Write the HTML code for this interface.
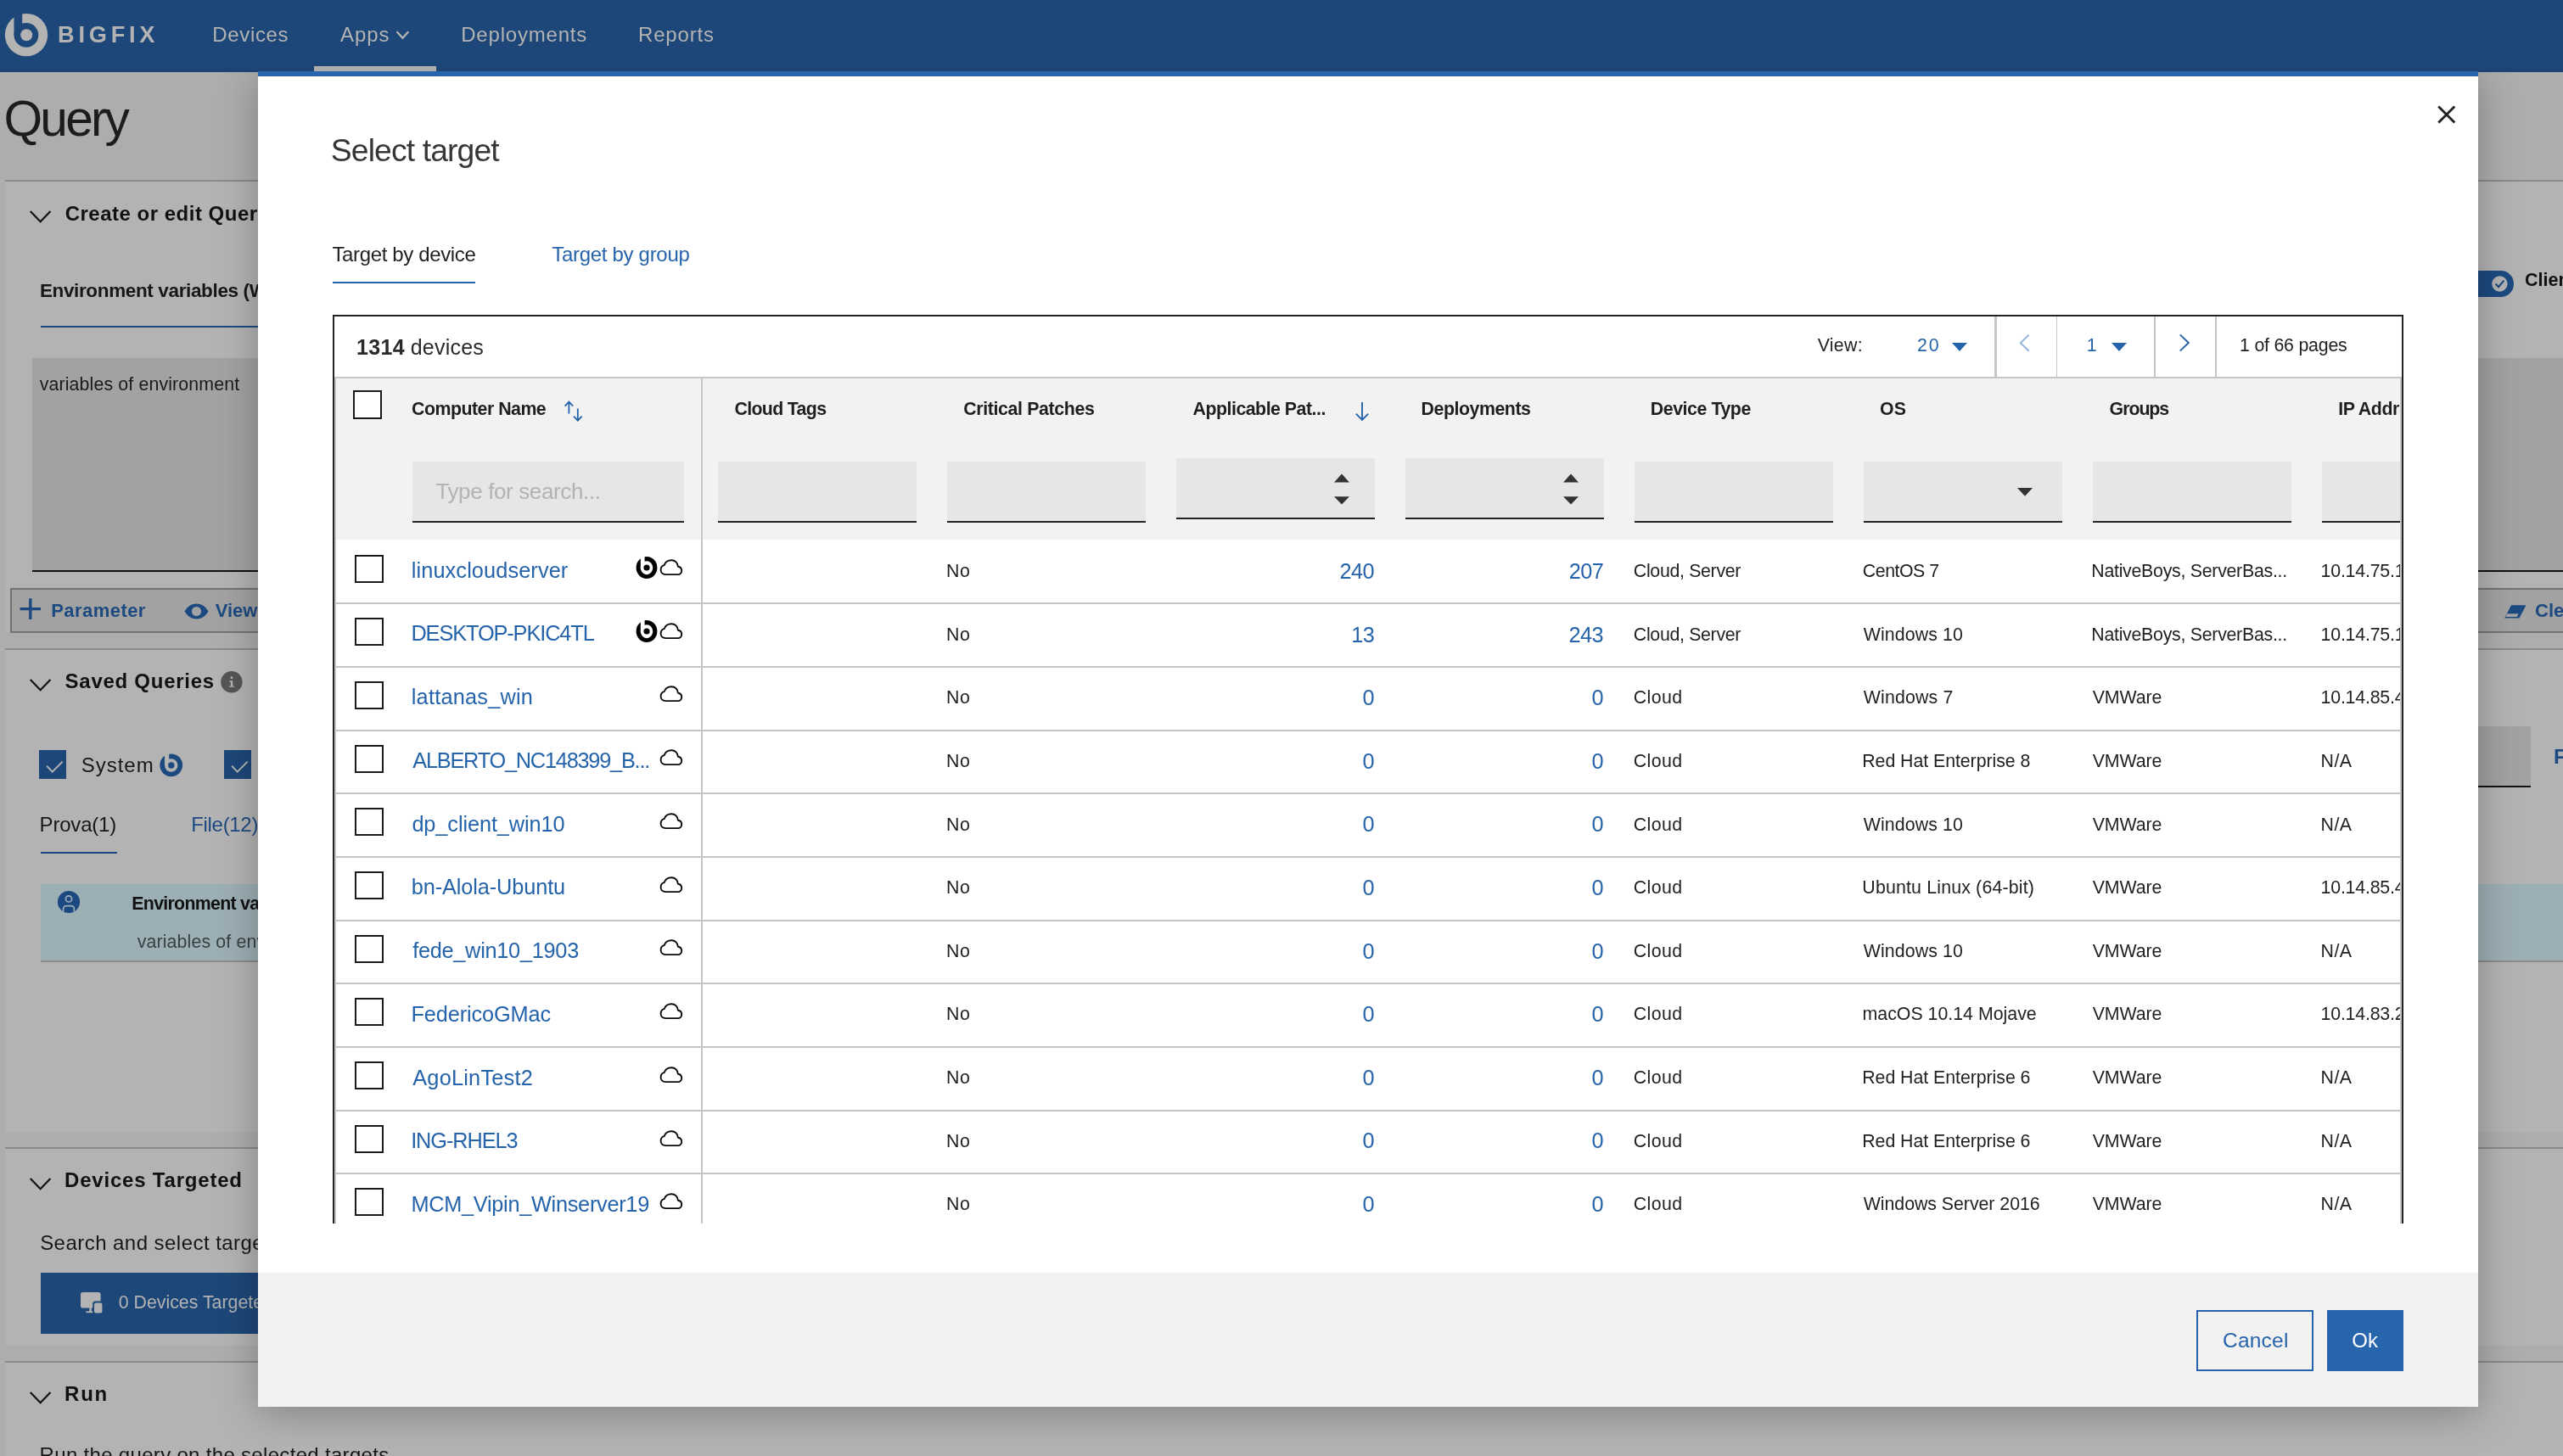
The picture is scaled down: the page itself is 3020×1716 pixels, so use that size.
<!DOCTYPE html>
<html><head><meta charset="utf-8"><title>BigFix Query - Select target</title>
<style>
html,body{margin:0;padding:0;overflow:hidden;}
body{width:3020px;height:1716px;overflow:hidden;position:relative;background:#adadad;font-family:"Liberation Sans",sans-serif;}
.b{position:absolute;box-sizing:border-box;}
.t{position:absolute;white-space:nowrap;line-height:0;height:0;font-family:"Liberation Sans",sans-serif;}
svg{position:absolute;overflow:visible;}
.clip{position:absolute;overflow:hidden;}
</style></head><body><div id="root" style="position:absolute;left:0;top:0;width:3020px;height:1716px;overflow:hidden;will-change:transform;">
<span class="t" style="top:140.00px;font-size:58.67px;color:#1c1c1c;letter-spacing:-2.854px;left:4.60px;">Query</span>
<div class="b" style="left:6px;top:212px;width:3014px;height:2px;background:#8a8a8a;"></div>
<div class="b" style="left:6px;top:214px;width:3014px;height:532px;background:#b3b3b3;"></div>
<svg style="left:34.5px;top:247.5px" width="26" height="16" viewBox="0 0 26 16"><path d="M0.8 1 L12.6 13.2 L24.4 1" fill="none" stroke="#111" stroke-width="2.2"/></svg>
<span class="t" style="top:251.50px;font-size:24px;color:#111;font-weight:bold;letter-spacing:0.499px;left:76.70px;">Create or edit Query</span>
<span class="t" style="top:342.50px;font-size:22.5px;color:#171717;font-weight:bold;letter-spacing:-0.357px;left:46.89px;">Environment variables (Windows)</span>
<div class="b" style="left:48px;top:384px;width:2500px;height:2.3px;background:#1c4a80;"></div>
<div class="b" style="left:38px;top:422px;width:2982px;height:250px;background:#a2a2a2;"></div>
<div class="b" style="left:38px;top:672px;width:2982px;height:2px;background:#111;"></div>
<span class="t" style="top:452.60px;font-size:21.33px;color:#1a1a1a;letter-spacing:0.133px;left:46.73px;">variables of environment</span>
<div class="b" style="left:12px;top:692.5px;width:3100px;height:53.5px;background:#a2a2a2;border:2px solid #767272;"></div>
<svg style="left:23px;top:705px" width="26" height="26" viewBox="0 0 26 26"><path d="M12.8 0.3 V25 M0.5 12.6 H25" stroke="#1c4a80" stroke-width="3.4" fill="none"/></svg>
<span class="t" style="top:720.30px;font-size:22px;color:#1c4a80;font-weight:bold;letter-spacing:0.443px;left:60.22px;">Parameter</span>
<svg style="left:216.5px;top:710.5px" width="29" height="19" viewBox="0 0 29 19">
<path d="M0.5 9.5 C4 3.5 9 0.5 14.5 0.5 C20 0.5 25 3.5 28.5 9.5 C25 15.5 20 18.5 14.5 18.5 C9 18.5 4 15.5 0.5 9.5 Z" fill="#1c4a80"/>
<circle cx="14.5" cy="9.5" r="5.6" fill="#a2a2a2"/></svg>
<span class="t" style="top:720.30px;font-size:22px;color:#1c4a80;font-weight:bold;left:253.64px;">View</span>
<div class="b" style="left:2900px;top:319.3px;width:62px;height:30.4px;background:#1c4a80;border-radius:15.2px;"></div>
<svg style="left:2935px;top:324px" width="22" height="22" viewBox="0 0 22 22"><circle cx="10.4" cy="10.5" r="9.2" fill="#b3b3b3"/><path d="M5.6 10.6 L9 14.2 L15.4 6.6" fill="none" stroke="#1c4a80" stroke-width="2.2"/></svg>
<span class="t" style="top:330.30px;font-size:21.5px;color:#111;font-weight:bold;left:2975.00px;">Client</span>
<svg style="left:2950px;top:712px" width="28" height="18" viewBox="0 0 28 18"><path d="M9 1.2 H26.5 L18.5 16.5 H1.2 Z" fill="#1c4a80"/><path d="M4.2 11.3 L2.5 15 H15.8 L17.7 11.3 Z" fill="#a2a2a2"/></svg>
<span class="t" style="top:720.30px;font-size:22px;color:#1c4a80;font-weight:bold;left:2987.00px;">Clear</span>
<div class="b" style="left:6px;top:764px;width:3014px;height:2px;background:#8a8a8a;"></div>
<div class="b" style="left:6px;top:766px;width:3014px;height:568px;background:#b3b3b3;"></div>
<svg style="left:34.5px;top:799.5px" width="26" height="16" viewBox="0 0 26 16"><path d="M0.8 1 L12.6 13.2 L24.4 1" fill="none" stroke="#111" stroke-width="2.2"/></svg>
<span class="t" style="top:803.10px;font-size:24px;color:#111;font-weight:bold;letter-spacing:0.738px;left:76.57px;">Saved Queries</span>
<svg style="left:259px;top:790px" width="28" height="28" viewBox="0 0 28 28"><circle cx="13.9" cy="13.7" r="12.7" fill="#555"/>
<rect x="12.7" y="7.4" width="2.5" height="2.6" fill="#b3b3b3"/><path d="M11.4 12.2 H15.2 V18.4 H17 V19.8 H10.9 V18.4 H12.9 V13.7 H11.4 Z" fill="#b3b3b3"/></svg>
<div class="b" style="left:46px;top:884.2px;width:32px;height:33.6px;background:#1d4778;"></div>
<svg style="left:46px;top:884.2px" width="32" height="34" viewBox="0 0 32 34"><path d="M9.1 18.6 L15.7 25.6 L27.7 13.6" fill="none" stroke="#b3b3b3" stroke-width="2"/></svg>
<span class="t" style="top:901.60px;font-size:24px;color:#171717;letter-spacing:0.949px;left:95.86px;">System</span>
<svg style="left:187px;top:887px" width="30" height="30" viewBox="0 0 30 30">
<circle cx="14.7" cy="14.8" r="13.4" fill="#1c4a80"/>
<circle cx="14.7" cy="15" r="7.7" fill="#b3b3b3"/>
<rect x="7" y="0" width="5.2" height="15" fill="#b3b3b3"/>
<circle cx="14.8" cy="15" r="3.7" fill="#1c4a80"/></svg>
<div class="b" style="left:264px;top:884.2px;width:32px;height:33.6px;background:#1d4778;"></div>
<svg style="left:264px;top:884.2px" width="32" height="34" viewBox="0 0 32 34"><path d="M9.1 18.6 L15.7 25.6 L27.7 13.6" fill="none" stroke="#b3b3b3" stroke-width="2"/></svg>
<span class="t" style="top:972.20px;font-size:24px;color:#171717;letter-spacing:-0.193px;left:46.60px;">Prova(1)</span>
<div class="b" style="left:48px;top:1004px;width:90px;height:2.3px;background:#1c4a80;"></div>
<span class="t" style="top:972.20px;font-size:24px;color:#1c4a80;letter-spacing:-0.307px;left:225.20px;">File(12)</span>
<div class="b" style="left:2900px;top:856px;width:82px;height:70px;background:#a2a2a2;"></div>
<div class="b" style="left:2900px;top:926px;width:82px;height:2px;background:#111;"></div>
<span class="t" style="top:891.60px;font-size:24.5px;color:#1c4a80;font-weight:bold;left:3008.96px;">Filter</span>
<div class="b" style="left:48px;top:1042px;width:2972px;height:90px;background:#9cafb5;"></div>
<div class="b" style="left:48px;top:1131.5px;width:2972px;height:2px;background:#8c8c8c;"></div>
<svg style="left:67px;top:1049px" width="28" height="28" viewBox="0 0 28 28"><defs><clipPath id="uc"><circle cx="14" cy="14" r="13.1"/></clipPath></defs>
<circle cx="14" cy="14" r="13.1" fill="#1c4a80"/>
<circle cx="14" cy="10.4" r="3.6" fill="none" stroke="#9cafb5" stroke-width="1.7"/>
<rect x="7.6" y="18.6" width="12.8" height="12" rx="3.4" fill="none" stroke="#9cafb5" stroke-width="1.7" clip-path="url(#uc)"/></svg>
<span class="t" style="top:1065.00px;font-size:21.33px;color:#111;font-weight:bold;letter-spacing:-0.716px;left:155.36px;">Environment variables (Windows)</span>
<span class="t" style="top:1110.40px;font-size:21.33px;color:#394144;letter-spacing:0.133px;left:161.73px;">variables of environment</span>
<div class="b" style="left:6px;top:1352px;width:3014px;height:2px;background:#8a8a8a;"></div>
<div class="b" style="left:6px;top:1354px;width:3014px;height:232px;background:#b3b3b3;"></div>
<svg style="left:34.5px;top:1388px" width="26" height="16" viewBox="0 0 26 16"><path d="M0.8 1 L12.6 13.2 L24.4 1" fill="none" stroke="#111" stroke-width="2.2"/></svg>
<span class="t" style="top:1391.30px;font-size:24px;color:#111;font-weight:bold;letter-spacing:0.795px;left:76.08px;">Devices Targeted</span>
<span class="t" style="top:1465.20px;font-size:24px;color:#171717;letter-spacing:0.456px;left:47.16px;">Search and select target devices</span>
<div class="b" style="left:48px;top:1500px;width:400px;height:71.6px;background:#1d4778;"></div>
<svg style="left:94px;top:1522px" width="28" height="28" viewBox="0 0 28 28">
<rect x="1" y="1" width="23.6" height="18.6" rx="2.6" fill="#b3b3b3"/>
<rect x="11.4" y="19" width="2.4" height="5" fill="#b3b3b3"/><rect x="7.4" y="23.4" width="9" height="1.8" fill="#b3b3b3"/>
<rect x="15.2" y="11.6" width="12.6" height="15.4" rx="3" fill="#1d4778"/>
<rect x="17" y="13.4" width="9.4" height="12" rx="2" fill="#b3b3b3"/></svg>
<span class="t" style="top:1535.00px;font-size:21.33px;color:#b3b3b3;left:139.75px;">0 Devices Targeted</span>
<div class="b" style="left:6px;top:1604px;width:3014px;height:2px;background:#8a8a8a;"></div>
<div class="b" style="left:6px;top:1606px;width:3014px;height:120px;background:#b3b3b3;"></div>
<svg style="left:34.5px;top:1640px" width="26" height="16" viewBox="0 0 26 16"><path d="M0.8 1 L12.6 13.2 L24.4 1" fill="none" stroke="#111" stroke-width="2.2"/></svg>
<span class="t" style="top:1643.10px;font-size:24px;color:#111;font-weight:bold;letter-spacing:1.722px;left:76.08px;">Run</span>
<span class="t" style="top:1714.80px;font-size:24px;color:#171717;letter-spacing:0.316px;left:46.60px;">Run the query on the selected targets.</span>
<div class="b" style="left:304px;top:84px;width:2616px;height:1574px;box-shadow:0 7px 44px 0px rgba(0,0,0,0.28);"></div>
<div class="b" style="left:0px;top:0px;width:3020px;height:85.4px;background:#1d4778;"></div>
<svg style="left:0;top:0" width="200" height="86" viewBox="0 0 200 86">
    <circle cx="31" cy="41.1" r="25.2" fill="#b3b3b3"/>
    <circle cx="30.9" cy="41.4" r="14.4" fill="#1d4778"/>
    <rect x="16.5" y="13" width="9.7" height="28.4" fill="#1d4778"/>
    <circle cx="31.2" cy="41.3" r="7" fill="#b3b3b3"/>
    </svg>
<span class="t" style="top:41.40px;font-size:27.2px;color:#b3b3b3;font-weight:bold;letter-spacing:4.773px;left:67.99px;">BIGFIX</span>
<span class="t" style="top:41.30px;font-size:24px;color:#b3b3b3;letter-spacing:0.648px;left:250.30px;">Devices</span>
<span class="t" style="top:41.30px;font-size:24px;color:#b3b3b3;letter-spacing:0.990px;left:400.93px;">Apps</span>
<svg style="left:465px;top:34px" width="20" height="16" viewBox="0 0 20 16"><path d="M2.5 3.2 L9.4 10.8 L16.3 3.2" fill="none" stroke="#b3b3b3" stroke-width="2.3"/></svg>
<div class="b" style="left:370px;top:78px;width:144px;height:6.5px;background:#b3b3b3;"></div>
<span class="t" style="top:41.30px;font-size:24px;color:#b3b3b3;letter-spacing:0.810px;left:543.20px;">Deployments</span>
<span class="t" style="top:41.30px;font-size:24px;color:#b3b3b3;letter-spacing:0.833px;left:752.00px;">Reports</span>
<div class="b" style="left:0px;top:74px;width:3020px;height:11.4px;background:linear-gradient(to bottom, rgba(0,0,0,0), rgba(0,0,0,0.05));"></div>
<div class="b" style="left:304px;top:84px;width:2616px;height:1574px;background:#fff;"></div>
<div class="b" style="left:304px;top:84px;width:2616px;height:6px;background:#2766ac;"></div>
<div class="b" style="left:304px;top:1500px;width:2616px;height:158px;background:#f2f2f2;"></div>
<span class="t" style="top:177.00px;font-size:37.33px;color:#363636;letter-spacing:-0.898px;left:389.84px;">Select target</span>
<svg style="left:2871px;top:123px" width="24" height="24" viewBox="0 0 24 24"><path d="M2.3 2.5 L21.3 21.5 M21.3 2.5 L2.3 21.5" stroke="#222" stroke-width="2.9" fill="none"/></svg>
<span class="t" style="top:299.50px;font-size:24px;color:#222222;letter-spacing:-0.365px;left:391.45px;">Target by device</span>
<div class="b" style="left:392px;top:332px;width:168px;height:2.3px;background:#2563ab;"></div>
<span class="t" style="top:299.50px;font-size:24px;color:#2563ab;letter-spacing:-0.303px;left:650.25px;">Target by group</span>
<div class="b" style="left:392px;top:370.5px;width:2440px;height:1071.5px;border:2px solid #222;border-bottom:none;"></div>
<span class="t" style="top:409.00px;font-size:25px;color:#2a2a2a;font-weight:bold;letter-spacing:0.359px;left:419.92px;">1314</span>
<span class="t" style="top:409.00px;font-size:25px;color:#2a2a2a;letter-spacing:0.228px;left:483.70px;">devices</span>
<span class="t" style="top:407.00px;font-size:21.33px;color:#222222;letter-spacing:0.299px;left:2141.69px;">View:</span>
<span class="t" style="top:407.00px;font-size:21.33px;color:#2563ab;letter-spacing:1.969px;left:2258.91px;">20</span>
<svg style="left:2300px;top:404px" width="18" height="10" viewBox="0 0 18 10"><path d="M0 0 H18 L9.0 10 Z" fill="#2563ab"/></svg>
<div class="b" style="left:2350px;top:372.5px;width:2.7px;height:72px;background:#c6c6c6;"></div>
<svg style="left:2378px;top:393px" width="16" height="23" viewBox="0 0 16 23"><path d="M12.6 1.6 L2.8 11.2 L12.6 20.8" fill="none" stroke="#93b4dc" stroke-width="2"/></svg>
<div class="b" style="left:2422.5px;top:372.5px;width:1.8px;height:72px;background:#c6c6c6;"></div>
<span class="t" style="top:407.00px;font-size:21.33px;color:#2563ab;left:2458.77px;">1</span>
<svg style="left:2488px;top:404px" width="18" height="10" viewBox="0 0 18 10"><path d="M0 0 H18 L9.0 10 Z" fill="#2563ab"/></svg>
<div class="b" style="left:2538px;top:372.5px;width:1.8px;height:72px;background:#c6c6c6;"></div>
<svg style="left:2566px;top:393px" width="16" height="23" viewBox="0 0 16 23"><path d="M2.8 1.4 L12.8 11 L2.8 20.6" fill="none" stroke="#2563ab" stroke-width="2"/></svg>
<div class="b" style="left:2610.3px;top:372.5px;width:1.8px;height:72px;background:#c6c6c6;"></div>
<span class="t" style="top:407.00px;font-size:21.33px;color:#222222;letter-spacing:-0.218px;left:2639.07px;">1 of 66 pages</span>
<div class="b" style="left:394px;top:444px;width:2436px;height:998px;border:2.3px solid #c6c6c6;border-bottom:none;"></div>
<div class="b" style="left:396.3px;top:446.3px;width:2431.4px;height:190px;background:#f2f2f2;"></div>
<div class="b" style="left:825.6px;top:446px;width:2.7px;height:996px;background:#c6c6c6;"></div>
<div class="b" style="left:416px;top:460px;width:34px;height:34px;background:#fff;border:2px solid #1a1a1a;"></div>
<span class="t" style="top:482.40px;font-size:21.33px;color:#1f1f1f;font-weight:bold;letter-spacing:-0.500px;left:485.00px;">Computer Name</span>
<svg style="left:664px;top:472px" width="24" height="26" viewBox="0 0 24 26">
<path d="M6.4 1.6 V15.4 M1.6 6.6 L6.4 1.6 L11.2 6.6 M16.8 9.6 V23.6 M12 18.6 L16.8 23.6 L21.6 18.6" fill="none" stroke="#2563ab" stroke-width="1.8"/></svg>
<span class="t" style="top:482.40px;font-size:21.33px;color:#1f1f1f;font-weight:bold;letter-spacing:-0.652px;left:865.40px;">Cloud Tags</span>
<span class="t" style="top:482.40px;font-size:21.33px;color:#1f1f1f;font-weight:bold;letter-spacing:-0.359px;left:1135.20px;">Critical Patches</span>
<span class="t" style="top:482.40px;font-size:21.33px;color:#1f1f1f;font-weight:bold;letter-spacing:-0.499px;left:1405.59px;">Applicable Pat...</span>
<span class="t" style="top:482.40px;font-size:21.33px;color:#1f1f1f;font-weight:bold;letter-spacing:-0.459px;left:1674.56px;">Deployments</span>
<span class="t" style="top:482.40px;font-size:21.33px;color:#1f1f1f;font-weight:bold;letter-spacing:-0.436px;left:1944.76px;">Device Type</span>
<span class="t" style="top:482.40px;font-size:21.33px;color:#1f1f1f;font-weight:bold;letter-spacing:0.165px;left:2215.00px;">OS</span>
<span class="t" style="top:482.40px;font-size:21.33px;color:#1f1f1f;font-weight:bold;letter-spacing:-1.044px;left:2485.60px;">Groups</span>
<div class="clip" style="left:2750px;top:460px;width:78px;height:50px;">
<span class="t" style="top:22.40px;font-size:21.33px;color:#1f1f1f;font-weight:bold;letter-spacing:-0.400px;left:5.16px;">IP Address</span>
</div>
<svg style="left:1595px;top:473px" width="20" height="24" viewBox="0 0 20 24"><path d="M10 1 V21.6 M2.8 14.6 L10 21.8 L17.2 14.6" fill="none" stroke="#2563ab" stroke-width="1.9"/></svg>
<div class="b" style="left:486px;top:544px;width:320px;height:69.5px;background:#e6e6e6;"></div>
<div class="b" style="left:486px;top:613.5px;width:320px;height:2.2px;background:#222;"></div>
<span class="t" style="top:579.00px;font-size:26px;color:#b3b3b3;letter-spacing:-0.370px;left:513.42px;">Type for search...</span>
<div class="b" style="left:846px;top:544px;width:234px;height:69.5px;background:#e6e6e6;"></div>
<div class="b" style="left:846px;top:613.5px;width:234px;height:2.2px;background:#222;"></div>
<div class="b" style="left:1116px;top:544px;width:234px;height:69.5px;background:#e6e6e6;"></div>
<div class="b" style="left:1116px;top:613.5px;width:234px;height:2.2px;background:#222;"></div>
<div class="b" style="left:1386px;top:540px;width:234px;height:69.5px;background:#e6e6e6;"></div>
<div class="b" style="left:1386px;top:609.5px;width:234px;height:2.2px;background:#222;"></div>
<div class="b" style="left:1656px;top:540px;width:234px;height:69.5px;background:#e6e6e6;"></div>
<div class="b" style="left:1656px;top:609.5px;width:234px;height:2.2px;background:#222;"></div>
<div class="b" style="left:1926px;top:544px;width:234px;height:69.5px;background:#e6e6e6;"></div>
<div class="b" style="left:1926px;top:613.5px;width:234px;height:2.2px;background:#222;"></div>
<div class="b" style="left:2196px;top:544px;width:234px;height:69.5px;background:#e6e6e6;"></div>
<div class="b" style="left:2196px;top:613.5px;width:234px;height:2.2px;background:#222;"></div>
<div class="b" style="left:2466px;top:544px;width:234px;height:69.5px;background:#e6e6e6;"></div>
<div class="b" style="left:2466px;top:613.5px;width:234px;height:2.2px;background:#222;"></div>
<div class="b" style="left:2736px;top:544px;width:92px;height:69.5px;background:#e6e6e6;"></div>
<div class="b" style="left:2736px;top:613.5px;width:92px;height:2.2px;background:#222;"></div>
<svg style="left:1572px;top:558px" width="18" height="38" viewBox="0 0 18 38"><path d="M0 10.4 L9 0.4 L18 10.4 Z M0 27.2 H18 L9 36.6 Z" fill="#333"/></svg>
<svg style="left:1842px;top:558px" width="18" height="38" viewBox="0 0 18 38"><path d="M0 10.4 L9 0.4 L18 10.4 Z M0 27.2 H18 L9 36.6 Z" fill="#333"/></svg>
<svg style="left:2377px;top:575px" width="18" height="9.8" viewBox="0 0 18 9.8"><path d="M0 0 H18 L9.0 9.8 Z" fill="#333"/></svg>
<div class="b" style="left:396.3px;top:710.0px;width:2431.4px;height:2px;background:#c6c6c6;"></div>
<div class="b" style="left:418px;top:653.5px;width:34px;height:33px;background:#fff;border:2px solid #1a1a1a;"></div>
<span class="t" style="top:671.60px;font-size:25.33px;color:#2563ab;letter-spacing:0.100px;left:484.79px;">linuxcloudserver</span>
<svg style="left:777px;top:658.0px" width="28" height="22" viewBox="0 0 28 22"><path d="M7.3 19.1 C3.8 19.1 1.6 16.8 1.6 13.8 C1.6 11 3.2 8.8 5.6 8.2 C6.8 4.6 10.2 2.2 14.2 2.2 C18.4 2.2 21.4 5.2 21.9 9.7 C24.4 10 26.2 12 26.2 14.5 C26.2 17.2 24.2 19.1 21.8 19.1 Z" fill="none" stroke="#0a0a0a" stroke-width="1.9" stroke-linejoin="round"/></svg>
<svg style="left:749px;top:655.0px" width="27" height="28" viewBox="0 0 27 28"><ellipse cx="13" cy="14" rx="12.4" ry="13" fill="#000"/><ellipse cx="13" cy="14.2" rx="7.2" ry="8" fill="#fff"/><rect x="5.8" y="-1" width="4.8" height="15.2" fill="#fff"/><circle cx="13" cy="14" r="3.6" fill="#000"/></svg>
<span class="t" style="top:673.10px;font-size:21.33px;color:#222222;letter-spacing:0.645px;left:1115.05px;">No</span>
<span class="t" style="top:672.90px;font-size:25.33px;color:#2563ab;letter-spacing:-0.600px;left:1578.41px;">240</span>
<span class="t" style="top:672.90px;font-size:25.33px;color:#2563ab;letter-spacing:-0.600px;left:1848.70px;">207</span>
<span class="t" style="top:673.10px;font-size:21.33px;color:#222222;letter-spacing:-0.323px;left:1924.87px;">Cloud, Server</span>
<span class="t" style="top:673.10px;font-size:21.33px;color:#222222;letter-spacing:-0.485px;left:2194.87px;">CentOS 7</span>
<span class="t" style="top:673.10px;font-size:21.33px;color:#222222;letter-spacing:-0.269px;left:2464.25px;">NativeBoys, ServerBas...</span>
<div class="clip" style="left:2730px;top:650.1px;width:98px;height:44px;">
<span class="t" style="top:23.00px;font-size:21.33px;color:#222222;letter-spacing:-0.200px;left:4.57px;">10.14.75.12</span>
</div>
<div class="b" style="left:396.3px;top:784.5px;width:2431.4px;height:2px;background:#c6c6c6;"></div>
<div class="b" style="left:418px;top:728.0px;width:34px;height:33px;background:#fff;border:2px solid #1a1a1a;"></div>
<span class="t" style="top:746.35px;font-size:25.33px;color:#2563ab;letter-spacing:-1.100px;left:484.41px;">DESKTOP-PKIC4TL</span>
<svg style="left:777px;top:732.7px" width="28" height="22" viewBox="0 0 28 22"><path d="M7.3 19.1 C3.8 19.1 1.6 16.8 1.6 13.8 C1.6 11 3.2 8.8 5.6 8.2 C6.8 4.6 10.2 2.2 14.2 2.2 C18.4 2.2 21.4 5.2 21.9 9.7 C24.4 10 26.2 12 26.2 14.5 C26.2 17.2 24.2 19.1 21.8 19.1 Z" fill="none" stroke="#0a0a0a" stroke-width="1.9" stroke-linejoin="round"/></svg>
<svg style="left:749px;top:729.7px" width="27" height="28" viewBox="0 0 27 28"><ellipse cx="13" cy="14" rx="12.4" ry="13" fill="#000"/><ellipse cx="13" cy="14.2" rx="7.2" ry="8" fill="#fff"/><rect x="5.8" y="-1" width="4.8" height="15.2" fill="#fff"/><circle cx="13" cy="14" r="3.6" fill="#000"/></svg>
<span class="t" style="top:747.70px;font-size:21.33px;color:#222222;letter-spacing:0.645px;left:1115.05px;">No</span>
<span class="t" style="top:747.50px;font-size:25.33px;color:#2563ab;letter-spacing:-0.600px;left:1592.25px;">13</span>
<span class="t" style="top:747.50px;font-size:25.33px;color:#2563ab;letter-spacing:-0.600px;left:1848.58px;">243</span>
<span class="t" style="top:747.70px;font-size:21.33px;color:#222222;letter-spacing:-0.323px;left:1924.87px;">Cloud, Server</span>
<span class="t" style="top:747.70px;font-size:21.33px;color:#222222;letter-spacing:0.113px;left:2195.74px;">Windows 10</span>
<span class="t" style="top:747.70px;font-size:21.33px;color:#222222;letter-spacing:-0.269px;left:2464.25px;">NativeBoys, ServerBas...</span>
<div class="clip" style="left:2730px;top:724.7px;width:98px;height:44px;">
<span class="t" style="top:23.00px;font-size:21.33px;color:#222222;letter-spacing:-0.200px;left:4.57px;">10.14.75.13</span>
</div>
<div class="b" style="left:396.3px;top:859.5px;width:2431.4px;height:2px;background:#c6c6c6;"></div>
<div class="b" style="left:418px;top:802.5px;width:34px;height:33px;background:#fff;border:2px solid #1a1a1a;"></div>
<span class="t" style="top:821.10px;font-size:25.33px;color:#2563ab;letter-spacing:0.211px;left:484.79px;">lattanas_win</span>
<svg style="left:777px;top:807.4px" width="28" height="22" viewBox="0 0 28 22"><path d="M7.3 19.1 C3.8 19.1 1.6 16.8 1.6 13.8 C1.6 11 3.2 8.8 5.6 8.2 C6.8 4.6 10.2 2.2 14.2 2.2 C18.4 2.2 21.4 5.2 21.9 9.7 C24.4 10 26.2 12 26.2 14.5 C26.2 17.2 24.2 19.1 21.8 19.1 Z" fill="none" stroke="#0a0a0a" stroke-width="1.9" stroke-linejoin="round"/></svg>
<span class="t" style="top:822.30px;font-size:21.33px;color:#222222;letter-spacing:0.645px;left:1115.05px;">No</span>
<span class="t" style="top:822.10px;font-size:25.33px;color:#2563ab;letter-spacing:-0.600px;left:1605.50px;">0</span>
<span class="t" style="top:822.10px;font-size:25.33px;color:#2563ab;letter-spacing:-0.600px;left:1875.50px;">0</span>
<span class="t" style="top:822.30px;font-size:21.33px;color:#222222;letter-spacing:0.356px;left:1924.87px;">Cloud</span>
<span class="t" style="top:822.30px;font-size:21.33px;color:#222222;letter-spacing:0.160px;left:2195.74px;">Windows 7</span>
<span class="t" style="top:822.30px;font-size:21.33px;color:#222222;letter-spacing:-0.077px;left:2465.69px;">VMWare</span>
<div class="clip" style="left:2730px;top:799.3px;width:98px;height:44px;">
<span class="t" style="top:23.00px;font-size:21.33px;color:#222222;letter-spacing:-0.200px;left:4.57px;">10.14.85.47</span>
</div>
<div class="b" style="left:396.3px;top:934.0px;width:2431.4px;height:2px;background:#c6c6c6;"></div>
<div class="b" style="left:418px;top:877.5px;width:34px;height:33px;background:#fff;border:2px solid #1a1a1a;"></div>
<span class="t" style="top:895.85px;font-size:25.33px;color:#2563ab;letter-spacing:-1.227px;left:486.23px;">ALBERTO_NC148399_B...</span>
<svg style="left:777px;top:882.2px" width="28" height="22" viewBox="0 0 28 22"><path d="M7.3 19.1 C3.8 19.1 1.6 16.8 1.6 13.8 C1.6 11 3.2 8.8 5.6 8.2 C6.8 4.6 10.2 2.2 14.2 2.2 C18.4 2.2 21.4 5.2 21.9 9.7 C24.4 10 26.2 12 26.2 14.5 C26.2 17.2 24.2 19.1 21.8 19.1 Z" fill="none" stroke="#0a0a0a" stroke-width="1.9" stroke-linejoin="round"/></svg>
<span class="t" style="top:896.90px;font-size:21.33px;color:#222222;letter-spacing:0.645px;left:1115.05px;">No</span>
<span class="t" style="top:896.70px;font-size:25.33px;color:#2563ab;letter-spacing:-0.600px;left:1605.50px;">0</span>
<span class="t" style="top:896.70px;font-size:25.33px;color:#2563ab;letter-spacing:-0.600px;left:1875.50px;">0</span>
<span class="t" style="top:896.90px;font-size:21.33px;color:#222222;letter-spacing:0.356px;left:1924.87px;">Cloud</span>
<span class="t" style="top:896.90px;font-size:21.33px;color:#222222;letter-spacing:-0.057px;left:2194.25px;">Red Hat Enterprise 8</span>
<span class="t" style="top:896.90px;font-size:21.33px;color:#222222;letter-spacing:-0.077px;left:2465.69px;">VMWare</span>
<div class="clip" style="left:2730px;top:873.9px;width:98px;height:44px;">
<span class="t" style="top:23.00px;font-size:21.33px;color:#222222;letter-spacing:0.550px;left:4.45px;">N/A</span>
</div>
<div class="b" style="left:396.3px;top:1008.5px;width:2431.4px;height:2px;background:#c6c6c6;"></div>
<div class="b" style="left:418px;top:952.0px;width:34px;height:33px;background:#fff;border:2px solid #1a1a1a;"></div>
<span class="t" style="top:970.60px;font-size:25.33px;color:#2563ab;letter-spacing:-0.101px;left:485.38px;">dp_client_win10</span>
<svg style="left:777px;top:956.9px" width="28" height="22" viewBox="0 0 28 22"><path d="M7.3 19.1 C3.8 19.1 1.6 16.8 1.6 13.8 C1.6 11 3.2 8.8 5.6 8.2 C6.8 4.6 10.2 2.2 14.2 2.2 C18.4 2.2 21.4 5.2 21.9 9.7 C24.4 10 26.2 12 26.2 14.5 C26.2 17.2 24.2 19.1 21.8 19.1 Z" fill="none" stroke="#0a0a0a" stroke-width="1.9" stroke-linejoin="round"/></svg>
<span class="t" style="top:971.50px;font-size:21.33px;color:#222222;letter-spacing:0.645px;left:1115.05px;">No</span>
<span class="t" style="top:971.30px;font-size:25.33px;color:#2563ab;letter-spacing:-0.600px;left:1605.50px;">0</span>
<span class="t" style="top:971.30px;font-size:25.33px;color:#2563ab;letter-spacing:-0.600px;left:1875.50px;">0</span>
<span class="t" style="top:971.50px;font-size:21.33px;color:#222222;letter-spacing:0.356px;left:1924.87px;">Cloud</span>
<span class="t" style="top:971.50px;font-size:21.33px;color:#222222;letter-spacing:0.113px;left:2195.74px;">Windows 10</span>
<span class="t" style="top:971.50px;font-size:21.33px;color:#222222;letter-spacing:-0.077px;left:2465.69px;">VMWare</span>
<div class="clip" style="left:2730px;top:948.5px;width:98px;height:44px;">
<span class="t" style="top:23.00px;font-size:21.33px;color:#222222;letter-spacing:0.550px;left:4.45px;">N/A</span>
</div>
<div class="b" style="left:396.3px;top:1083.5px;width:2431.4px;height:2px;background:#c6c6c6;"></div>
<div class="b" style="left:418px;top:1026.5px;width:34px;height:33px;background:#fff;border:2px solid #1a1a1a;"></div>
<span class="t" style="top:1045.35px;font-size:25.33px;color:#2563ab;letter-spacing:-0.122px;left:484.84px;">bn-Alola-Ubuntu</span>
<svg style="left:777px;top:1031.6px" width="28" height="22" viewBox="0 0 28 22"><path d="M7.3 19.1 C3.8 19.1 1.6 16.8 1.6 13.8 C1.6 11 3.2 8.8 5.6 8.2 C6.8 4.6 10.2 2.2 14.2 2.2 C18.4 2.2 21.4 5.2 21.9 9.7 C24.4 10 26.2 12 26.2 14.5 C26.2 17.2 24.2 19.1 21.8 19.1 Z" fill="none" stroke="#0a0a0a" stroke-width="1.9" stroke-linejoin="round"/></svg>
<span class="t" style="top:1046.10px;font-size:21.33px;color:#222222;letter-spacing:0.645px;left:1115.05px;">No</span>
<span class="t" style="top:1045.90px;font-size:25.33px;color:#2563ab;letter-spacing:-0.600px;left:1605.50px;">0</span>
<span class="t" style="top:1045.90px;font-size:25.33px;color:#2563ab;letter-spacing:-0.600px;left:1875.50px;">0</span>
<span class="t" style="top:1046.10px;font-size:21.33px;color:#222222;letter-spacing:0.356px;left:1924.87px;">Cloud</span>
<span class="t" style="top:1046.10px;font-size:21.33px;color:#222222;letter-spacing:0.165px;left:2194.36px;">Ubuntu Linux (64-bit)</span>
<span class="t" style="top:1046.10px;font-size:21.33px;color:#222222;letter-spacing:-0.077px;left:2465.69px;">VMWare</span>
<div class="clip" style="left:2730px;top:1023.1px;width:98px;height:44px;">
<span class="t" style="top:23.00px;font-size:21.33px;color:#222222;letter-spacing:-0.200px;left:4.57px;">10.14.85.42</span>
</div>
<div class="b" style="left:396.3px;top:1158.0px;width:2431.4px;height:2px;background:#c6c6c6;"></div>
<div class="b" style="left:418px;top:1101.5px;width:34px;height:33px;background:#fff;border:2px solid #1a1a1a;"></div>
<span class="t" style="top:1120.10px;font-size:25.33px;color:#2563ab;letter-spacing:-0.277px;left:486.13px;">fede_win10_1903</span>
<svg style="left:777px;top:1106.3px" width="28" height="22" viewBox="0 0 28 22"><path d="M7.3 19.1 C3.8 19.1 1.6 16.8 1.6 13.8 C1.6 11 3.2 8.8 5.6 8.2 C6.8 4.6 10.2 2.2 14.2 2.2 C18.4 2.2 21.4 5.2 21.9 9.7 C24.4 10 26.2 12 26.2 14.5 C26.2 17.2 24.2 19.1 21.8 19.1 Z" fill="none" stroke="#0a0a0a" stroke-width="1.9" stroke-linejoin="round"/></svg>
<span class="t" style="top:1120.70px;font-size:21.33px;color:#222222;letter-spacing:0.645px;left:1115.05px;">No</span>
<span class="t" style="top:1120.50px;font-size:25.33px;color:#2563ab;letter-spacing:-0.600px;left:1605.50px;">0</span>
<span class="t" style="top:1120.50px;font-size:25.33px;color:#2563ab;letter-spacing:-0.600px;left:1875.50px;">0</span>
<span class="t" style="top:1120.70px;font-size:21.33px;color:#222222;letter-spacing:0.356px;left:1924.87px;">Cloud</span>
<span class="t" style="top:1120.70px;font-size:21.33px;color:#222222;letter-spacing:0.113px;left:2195.74px;">Windows 10</span>
<span class="t" style="top:1120.70px;font-size:21.33px;color:#222222;letter-spacing:-0.077px;left:2465.69px;">VMWare</span>
<div class="clip" style="left:2730px;top:1097.7px;width:98px;height:44px;">
<span class="t" style="top:23.00px;font-size:21.33px;color:#222222;letter-spacing:0.550px;left:4.45px;">N/A</span>
</div>
<div class="b" style="left:396.3px;top:1232.5px;width:2431.4px;height:2px;background:#c6c6c6;"></div>
<div class="b" style="left:418px;top:1176.0px;width:34px;height:33px;background:#fff;border:2px solid #1a1a1a;"></div>
<span class="t" style="top:1194.85px;font-size:25.33px;color:#2563ab;letter-spacing:-0.124px;left:484.41px;">FedericoGMac</span>
<svg style="left:777px;top:1181.0px" width="28" height="22" viewBox="0 0 28 22"><path d="M7.3 19.1 C3.8 19.1 1.6 16.8 1.6 13.8 C1.6 11 3.2 8.8 5.6 8.2 C6.8 4.6 10.2 2.2 14.2 2.2 C18.4 2.2 21.4 5.2 21.9 9.7 C24.4 10 26.2 12 26.2 14.5 C26.2 17.2 24.2 19.1 21.8 19.1 Z" fill="none" stroke="#0a0a0a" stroke-width="1.9" stroke-linejoin="round"/></svg>
<span class="t" style="top:1195.30px;font-size:21.33px;color:#222222;letter-spacing:0.645px;left:1115.05px;">No</span>
<span class="t" style="top:1195.10px;font-size:25.33px;color:#2563ab;letter-spacing:-0.600px;left:1605.50px;">0</span>
<span class="t" style="top:1195.10px;font-size:25.33px;color:#2563ab;letter-spacing:-0.600px;left:1875.50px;">0</span>
<span class="t" style="top:1195.30px;font-size:21.33px;color:#222222;letter-spacing:0.356px;left:1924.87px;">Cloud</span>
<span class="t" style="top:1195.30px;font-size:21.33px;color:#222222;letter-spacing:0.004px;left:2194.54px;">macOS 10.14 Mojave</span>
<span class="t" style="top:1195.30px;font-size:21.33px;color:#222222;letter-spacing:-0.077px;left:2465.69px;">VMWare</span>
<div class="clip" style="left:2730px;top:1172.3px;width:98px;height:44px;">
<span class="t" style="top:23.00px;font-size:21.33px;color:#222222;letter-spacing:-0.200px;left:4.57px;">10.14.83.21</span>
</div>
<div class="b" style="left:396.3px;top:1307.5px;width:2431.4px;height:2px;background:#c6c6c6;"></div>
<div class="b" style="left:418px;top:1250.5px;width:34px;height:33px;background:#fff;border:2px solid #1a1a1a;"></div>
<span class="t" style="top:1269.60px;font-size:25.33px;color:#2563ab;letter-spacing:0.217px;left:486.23px;">AgoLinTest2</span>
<svg style="left:777px;top:1255.8px" width="28" height="22" viewBox="0 0 28 22"><path d="M7.3 19.1 C3.8 19.1 1.6 16.8 1.6 13.8 C1.6 11 3.2 8.8 5.6 8.2 C6.8 4.6 10.2 2.2 14.2 2.2 C18.4 2.2 21.4 5.2 21.9 9.7 C24.4 10 26.2 12 26.2 14.5 C26.2 17.2 24.2 19.1 21.8 19.1 Z" fill="none" stroke="#0a0a0a" stroke-width="1.9" stroke-linejoin="round"/></svg>
<span class="t" style="top:1269.90px;font-size:21.33px;color:#222222;letter-spacing:0.645px;left:1115.05px;">No</span>
<span class="t" style="top:1269.70px;font-size:25.33px;color:#2563ab;letter-spacing:-0.600px;left:1605.50px;">0</span>
<span class="t" style="top:1269.70px;font-size:25.33px;color:#2563ab;letter-spacing:-0.600px;left:1875.50px;">0</span>
<span class="t" style="top:1269.90px;font-size:21.33px;color:#222222;letter-spacing:0.356px;left:1924.87px;">Cloud</span>
<span class="t" style="top:1269.90px;font-size:21.33px;color:#222222;letter-spacing:-0.050px;left:2194.25px;">Red Hat Enterprise 6</span>
<span class="t" style="top:1269.90px;font-size:21.33px;color:#222222;letter-spacing:-0.077px;left:2465.69px;">VMWare</span>
<div class="clip" style="left:2730px;top:1246.9px;width:98px;height:44px;">
<span class="t" style="top:23.00px;font-size:21.33px;color:#222222;letter-spacing:0.550px;left:4.45px;">N/A</span>
</div>
<div class="b" style="left:396.3px;top:1382.0px;width:2431.4px;height:2px;background:#c6c6c6;"></div>
<div class="b" style="left:418px;top:1325.5px;width:34px;height:33px;background:#fff;border:2px solid #1a1a1a;"></div>
<span class="t" style="top:1344.35px;font-size:25.33px;color:#2563ab;letter-spacing:-1.074px;left:484.14px;">ING-RHEL3</span>
<svg style="left:777px;top:1330.5px" width="28" height="22" viewBox="0 0 28 22"><path d="M7.3 19.1 C3.8 19.1 1.6 16.8 1.6 13.8 C1.6 11 3.2 8.8 5.6 8.2 C6.8 4.6 10.2 2.2 14.2 2.2 C18.4 2.2 21.4 5.2 21.9 9.7 C24.4 10 26.2 12 26.2 14.5 C26.2 17.2 24.2 19.1 21.8 19.1 Z" fill="none" stroke="#0a0a0a" stroke-width="1.9" stroke-linejoin="round"/></svg>
<span class="t" style="top:1344.50px;font-size:21.33px;color:#222222;letter-spacing:0.645px;left:1115.05px;">No</span>
<span class="t" style="top:1344.30px;font-size:25.33px;color:#2563ab;letter-spacing:-0.600px;left:1605.50px;">0</span>
<span class="t" style="top:1344.30px;font-size:25.33px;color:#2563ab;letter-spacing:-0.600px;left:1875.50px;">0</span>
<span class="t" style="top:1344.50px;font-size:21.33px;color:#222222;letter-spacing:0.356px;left:1924.87px;">Cloud</span>
<span class="t" style="top:1344.50px;font-size:21.33px;color:#222222;letter-spacing:-0.050px;left:2194.25px;">Red Hat Enterprise 6</span>
<span class="t" style="top:1344.50px;font-size:21.33px;color:#222222;letter-spacing:-0.077px;left:2465.69px;">VMWare</span>
<div class="clip" style="left:2730px;top:1321.5px;width:98px;height:44px;">
<span class="t" style="top:23.00px;font-size:21.33px;color:#222222;letter-spacing:0.550px;left:4.45px;">N/A</span>
</div>
<div class="b" style="left:418px;top:1400.0px;width:34px;height:33px;background:#fff;border:2px solid #1a1a1a;"></div>
<span class="t" style="top:1419.10px;font-size:25.33px;color:#2563ab;letter-spacing:-0.293px;left:484.41px;">MCM_Vipin_Winserver19</span>
<svg style="left:777px;top:1405.2px" width="28" height="22" viewBox="0 0 28 22"><path d="M7.3 19.1 C3.8 19.1 1.6 16.8 1.6 13.8 C1.6 11 3.2 8.8 5.6 8.2 C6.8 4.6 10.2 2.2 14.2 2.2 C18.4 2.2 21.4 5.2 21.9 9.7 C24.4 10 26.2 12 26.2 14.5 C26.2 17.2 24.2 19.1 21.8 19.1 Z" fill="none" stroke="#0a0a0a" stroke-width="1.9" stroke-linejoin="round"/></svg>
<span class="t" style="top:1419.10px;font-size:21.33px;color:#222222;letter-spacing:0.645px;left:1115.05px;">No</span>
<span class="t" style="top:1418.90px;font-size:25.33px;color:#2563ab;letter-spacing:-0.600px;left:1605.50px;">0</span>
<span class="t" style="top:1418.90px;font-size:25.33px;color:#2563ab;letter-spacing:-0.600px;left:1875.50px;">0</span>
<span class="t" style="top:1419.10px;font-size:21.33px;color:#222222;letter-spacing:0.356px;left:1924.87px;">Cloud</span>
<span class="t" style="top:1419.10px;font-size:21.33px;color:#222222;letter-spacing:-0.041px;left:2195.74px;">Windows Server 2016</span>
<span class="t" style="top:1419.10px;font-size:21.33px;color:#222222;letter-spacing:-0.077px;left:2465.69px;">VMWare</span>
<div class="clip" style="left:2730px;top:1396.1px;width:98px;height:44px;">
<span class="t" style="top:23.00px;font-size:21.33px;color:#222222;letter-spacing:0.550px;left:4.45px;">N/A</span>
</div>
<div class="b" style="left:380px;top:1442px;width:2470px;height:58px;background:#fff;"></div>
<div class="b" style="left:2588px;top:1544px;width:138px;height:71.7px;background:#f2f2f2;border:2px solid #2563ab;"></div>
<span class="t" style="top:1579.50px;font-size:24.5px;color:#2563ab;letter-spacing:0.213px;left:2619.00px;">Cancel</span>
<div class="b" style="left:2742px;top:1544px;width:90px;height:71.7px;background:#2766ac;"></div>
<span class="t" style="top:1579.50px;font-size:24px;color:#fff;letter-spacing:-0.020px;left:2771.31px;">Ok</span>
</div></body></html>
